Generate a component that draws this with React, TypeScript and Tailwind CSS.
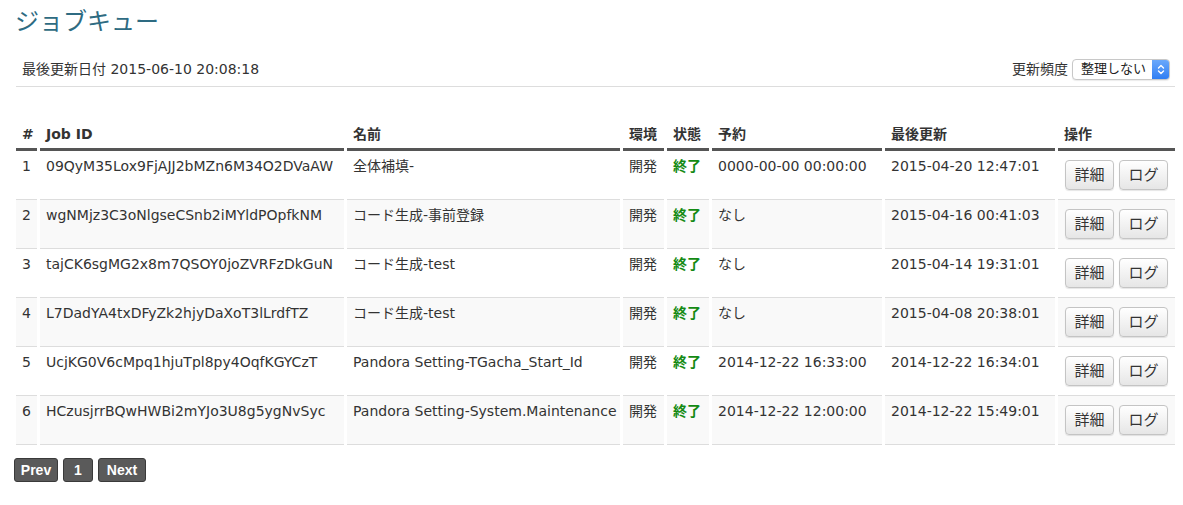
import React from "react";

const rows = [
  { n: 1, id: "09QyM35Lox9FjAJJ2bMZn6M34O2DVaAW", name: "全体補填-", env: "開発", st: "終了", rsv: "0000-00-00 00:00:00", upd: "2015-04-20 12:47:01" },
  { n: 2, id: "wgNMjz3C3oNlgseCSnb2iMYldPOpfkNM", name: "コード生成-事前登録", env: "開発", st: "終了", rsv: "なし", upd: "2015-04-16 00:41:03" },
  { n: 3, id: "tajCK6sgMG2x8m7QSOY0joZVRFzDkGuN", name: "コード生成-test", env: "開発", st: "終了", rsv: "なし", upd: "2015-04-14 19:31:01" },
  { n: 4, id: "L7DadYA4txDFyZk2hjyDaXoT3lLrdfTZ", name: "コード生成-test", env: "開発", st: "終了", rsv: "なし", upd: "2015-04-08 20:38:01" },
  { n: 5, id: "UcjKG0V6cMpq1hjuTpl8py4OqfKGYCzT", name: "Pandora Setting-TGacha_Start_Id", env: "開発", st: "終了", rsv: "2014-12-22 16:33:00", upd: "2014-12-22 16:34:01" },
  { n: 6, id: "HCzusjrrBQwHWBi2mYJo3U8g5ygNvSyc", name: "Pandora Setting-System.Maintenance", env: "開発", st: "終了", rsv: "2014-12-22 12:00:00", upd: "2014-12-22 15:49:01" },
];

const font = { fontFamily: '"DejaVu Sans", "Noto Sans CJK JP", sans-serif' };

function Btn({ children }: { children: React.ReactNode }) {
  return (
    <button className="h-[30px] w-[49px] rounded-[4px] border border-[#c4c4c4] bg-gradient-to-b from-white to-[#e6e6e6] text-[15px] text-[#333] shadow-[0_1px_1px_rgba(0,0,0,0.1)] leading-none">
      {children}
    </button>
  );
}

function PageBtn({ children, w }: { children: React.ReactNode; w: string }) {
  return (
    <button
      className={`h-[24px] ${w} rounded-[3px] border border-[#3a3a3a] bg-[#5a5a5a] text-white font-bold text-[14px] leading-none`}
      style={{ fontFamily: '"Liberation Sans", Arial, sans-serif' }}
    >
      {children}
    </button>
  );
}

export default function App() {
  const th = "text-left align-bottom pt-[10px] pb-[4px] px-[6px] border-b-[3px] border-[#555] font-bold text-[14px] leading-[20px] text-[#333] whitespace-nowrap";
  return (
    <div className="w-[1183px] h-[505px] bg-white text-[#333] overflow-hidden" style={font}>
      <div className="pl-[16px] pr-[8px]">
        <h1 className="pt-[6px] pl-0 -ml-[1px] text-[24px] leading-[32px] text-[#2e6b82] font-normal">ジョブキュー</h1>
        <div className="mt-[18px] flex items-center justify-between h-[26px] border-b border-[#dddddd] pb-[4px] box-content">
          <div className="pl-[6px] text-[14px] leading-[20px]">最後更新日付 2015-06-10 20:08:18</div>
          <div className="flex items-center gap-[4px] text-[14px] pr-[5px]">
            <span>更新頻度</span>
            <div className="flex items-center h-[21px] w-[98px] rounded-[4px] border border-[#c8c8c8] bg-white shadow-[0_1px_1px_rgba(0,0,0,0.08)] overflow-hidden">
              <span className="flex-1 pl-[8px] text-[13px] text-[#222]">整理しない</span>
              <span className="w-[17px] h-full bg-gradient-to-b from-[#6aa8fb] to-[#2f7ef3] flex items-center justify-center">
                <svg width="8" height="13" viewBox="0 0 8 13" fill="none" stroke="white" strokeWidth="1.4" strokeLinecap="round" strokeLinejoin="round">
                  <path d="M1.5 5 L4 2.5 L6.5 5" />
                  <path d="M1.5 8 L4 10.5 L6.5 8" />
                </svg>
              </span>
            </div>
          </div>
        </div>
        <div className="mt-[27px] -ml-[3px] w-[1165px]">
          <table className="table-fixed w-full border-separate border-spacing-x-[3px] border-spacing-y-0">
            <colgroup>
              <col className="w-[21px]" />
              <col className="w-[304px]" />
              <col className="w-[273px]" />
              <col className="w-[41px]" />
              <col className="w-[42px]" />
              <col className="w-[170px]" />
              <col className="w-[170px]" />
              <col className="w-[117px]" />
            </colgroup>
            <thead>
              <tr>
                <th className={th}>#</th>
                <th className={th}>Job ID</th>
                <th className={th}>名前</th>
                <th className={th}>環境</th>
                <th className={th}>状態</th>
                <th className={th}>予約</th>
                <th className={th}>最後更新</th>
                <th className={th}>操作</th>
              </tr>
            </thead>
            <tbody>
              {rows.map((r, i) => {
                const bg = i % 2 === 1 ? "bg-[#f9f9f9]" : "bg-white";
                const bt = i === 0 ? "" : "border-t border-[#dddddd]";
                const bb = i === rows.length - 1 ? "border-b border-[#dddddd]" : "";
                const td = `${bg} ${bt} ${bb} align-top pt-[5px] px-[6px] text-[14px] leading-[20px] whitespace-nowrap overflow-visible`;
                return (
                  <tr key={r.n}>
                    <td className={td}>{r.n}</td>
                    <td className={td}>{r.id}</td>
                    <td className={td}>{r.name}</td>
                    <td className={td}>{r.env}</td>
                    <td className={`${td} font-bold text-[#138a13]`}>{r.st}</td>
                    <td className={td}>{r.rsv}</td>
                    <td className={td}>{r.upd}</td>
                    <td className={`${bg} ${bt} ${bb} align-top pt-[9px] pb-[9px] pl-[7px] whitespace-nowrap`}>
                      <div className="flex gap-[5px]">
                        <Btn>詳細</Btn>
                        <Btn>ログ</Btn>
                      </div>
                    </td>
                  </tr>
                );
              })}
            </tbody>
          </table>
        </div>
        <div className="mt-[13px] -ml-[2px] flex gap-[5px]">
          <PageBtn w="w-[44px]">Prev</PageBtn>
          <PageBtn w="w-[30px]">1</PageBtn>
          <PageBtn w="w-[48px]">Next</PageBtn>
        </div>
      </div>
    </div>
  );
}
